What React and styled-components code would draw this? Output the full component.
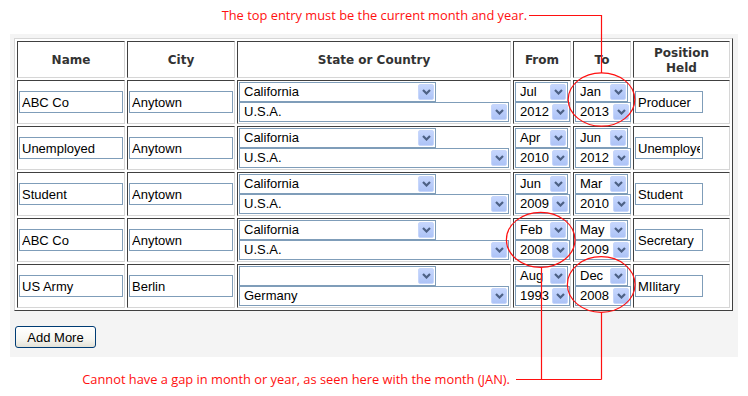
import React from 'react';
import styled, { createGlobalStyle } from 'styled-components';

const GlobalStyle = createGlobalStyle`
  body {
    margin: 0;
    background: #fff;
    font-family: "Liberation Sans", Arial, sans-serif;
  }
`;

const Page = styled.div`
  position: relative;
  width: 748px;
  height: 396px;
  overflow: hidden;
`;

const Note = styled.div`
  display: flex;
  justify-content: flex-end;
  box-sizing: border-box;
  height: ${p => p.$height}px;
  padding-top: ${p => p.$top}px;
  padding-right: ${p => p.$right}px;
  color: #ff1010;
  font-family: "Open Sans", "Noto Sans", sans-serif;
  font-size: 12.85px;
  line-height: 16px;
  white-space: nowrap;
`;

const Panel = styled.div`
  box-sizing: border-box;
  width: 728px;
  margin-left: 10px;
  padding: 4px 0 9px 4px;
  background: #f4f4f4;
`;

const Grid = styled.table`
  table-layout: fixed;
  width: 719px;
  border-collapse: separate;
  border-spacing: 2px;
  border: 1px solid;
  border-color: #d6d6d6 #404040 #404040 #d6d6d6;
  background: #fff;
`;

const HeadRow = styled.tr`
  height: 37px;
`;

const Row = styled.tr`
  height: 44px;
`;

const Head = styled.th`
  box-sizing: border-box;
  width: ${p => p.$w}px;
  padding: 2px 1px 0;
  border: 1px solid;
  border-color: #404040 #d6d6d6 #d6d6d6 #404040;
  font-family: "DejaVu Sans", Verdana, sans-serif;
  font-size: 12px;
  line-height: 15px;
  font-weight: bold;
  color: #333;
  text-align: center;
  vertical-align: middle;
`;

const Cell = styled.td`
  padding: 1px;
  border: 1px solid;
  border-color: #404040 #d6d6d6 #d6d6d6 #404040;
  vertical-align: middle;
`;

const Stack = styled.div`
  display: flex;
  flex-direction: column;
  align-items: flex-start;
`;

const TextBox = styled.input`
  display: block;
  box-sizing: border-box;
  width: ${p => p.$w}px;
  height: 22px;
  margin: 0;
  padding: 1px 2px;
  border: 1px solid #7f9db9;
  font-family: "Liberation Sans", Arial, sans-serif;
  font-size: 13px;
  color: #000;
  background: #fff;
  outline: none;
`;

const SelectBox = styled.div`
  display: flex;
  align-items: stretch;
  box-sizing: border-box;
  width: ${p => p.$w}px;
  height: 20px;
  border: 1px solid #7f9db9;
  background: #fff;
  font-size: 13px;
  color: #000;
`;

const SelectText = styled.span`
  flex: 1;
  overflow: hidden;
  padding-left: 4px;
  line-height: 18px;
  white-space: nowrap;
`;

const DropButton = styled.span`
  display: flex;
  align-items: center;
  justify-content: center;
  width: 16px;
  margin: 1px;
  border: 1px solid #c6d6fb;
  border-radius: 2px;
  background: linear-gradient(#c6d6fd, #adc3f6);
  box-sizing: border-box;
`;

const Footer = styled.div`
  margin-top: 15px;
  padding-left: 1px;
`;

const Button = styled.button`
  width: 81px;
  height: 22px;
  padding: 0;
  border: 1px solid #003c74;
  border-radius: 3px;
  background: linear-gradient(#ffffff 0%, #f6f6f2 60%, #e3e1d6 100%);
  font-family: "Liberation Sans", Arial, sans-serif;
  font-size: 13px;
  color: #000;
`;

const Overlay = styled.svg`
  position: absolute;
  left: 0;
  top: 0;
  pointer-events: none;
`;

const Chevron = () => (
  <svg width="9" height="6" viewBox="0 0 9 6">
    <path d="M1 1 L4.5 4.5 L8 1" fill="none" stroke="#4d6185" strokeWidth="2.2" />
  </svg>
);

function Select({ value, w }) {
  return (
    <SelectBox $w={w}>
      <SelectText>{value}</SelectText>
      <DropButton><Chevron /></DropButton>
    </SelectBox>
  );
}

const rows = [
  { name: 'ABC Co', city: 'Anytown', state: 'California', country: 'U.S.A.', fm: 'Jul', fy: '2012', tm: 'Jan', ty: '2013', pos: 'Producer' },
  { name: 'Unemployed', city: 'Anytown', state: 'California', country: 'U.S.A.', fm: 'Apr', fy: '2010', tm: 'Jun', ty: '2012', pos: 'Unemployed' },
  { name: 'Student', city: 'Anytown', state: 'California', country: 'U.S.A.', fm: 'Jun', fy: '2009', tm: 'Mar', ty: '2010', pos: 'Student' },
  { name: 'ABC Co', city: 'Anytown', state: 'California', country: 'U.S.A.', fm: 'Feb', fy: '2008', tm: 'May', ty: '2009', pos: 'Secretary' },
  { name: 'US Army', city: 'Berlin', state: '', country: 'Germany', fm: 'Aug', fy: '1993', tm: 'Dec', ty: '2008', pos: 'MIlitary' },
];

export default function App() {
  return (
    <Page>
      <GlobalStyle />
      <Note $height={34} $top={7} $right={221}>
        The top entry must be the current month and year.
      </Note>
      <Panel>
        <Grid>
          <thead>
            <HeadRow>
              <Head $w={108}>Name</Head>
              <Head $w={108}>City</Head>
              <Head $w={274}>State or Country</Head>
              <Head $w={58}>From</Head>
              <Head $w={58}>To</Head>
              <Head $w={97}>Position<br />Held</Head>
            </HeadRow>
          </thead>
          <tbody>
            {rows.map((r, i) => (
              <Row key={i}>
                <Cell><TextBox $w={104} defaultValue={r.name} readOnly /></Cell>
                <Cell><TextBox $w={104} defaultValue={r.city} readOnly /></Cell>
                <Cell>
                  <Stack>
                    <Select w={197} value={r.state} />
                    <Select w={270} value={r.country} />
                  </Stack>
                </Cell>
                <Cell>
                  <Stack>
                    <Select w={53} value={r.fm} />
                    <Select w={55} value={r.fy} />
                  </Stack>
                </Cell>
                <Cell>
                  <Stack>
                    <Select w={53} value={r.tm} />
                    <Select w={56} value={r.ty} />
                  </Stack>
                </Cell>
                <Cell><TextBox $w={68} defaultValue={r.pos} readOnly /></Cell>
              </Row>
            ))}
          </tbody>
        </Grid>
        <Footer>
          <Button>Add More</Button>
        </Footer>
      </Panel>
      <Note $height={30} $top={14} $right={238}>
        Cannot have a gap in month or year, as seen here with the month (JAN).
      </Note>

      <Overlay width="748" height="396" viewBox="0 0 748 396">
        <g fill="none" stroke="#ff1010" strokeWidth="1.2">
          <path d="M529 15.5 H601.5 V73" />
          <ellipse cx="601.5" cy="99.5" rx="33.3" ry="26.7" />
          <ellipse cx="540.7" cy="239.8" rx="34.3" ry="27.5" />
          <ellipse cx="601.2" cy="284.5" rx="33.8" ry="27.8" />
          <path d="M541.5 267.3 V379.5 M601.5 312.3 V379.5 M516 379.5 H601.5" />
        </g>
      </Overlay>
    </Page>
  );
}
